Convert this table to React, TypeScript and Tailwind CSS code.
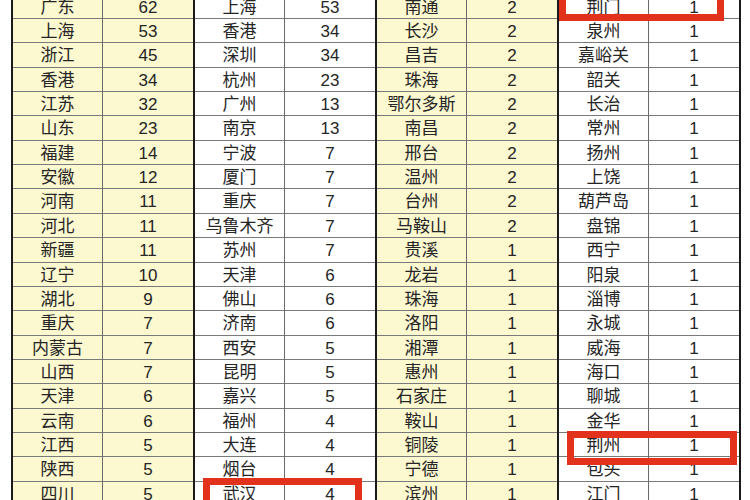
const groups: [string, number][][] = [
  [
    ["广东", 62], ["上海", 53], ["浙江", 45], ["香港", 34], ["江苏", 32], ["山东", 23], ["福建", 14],
    ["安徽", 12], ["河南", 11], ["河北", 11], ["新疆", 11], ["辽宁", 10], ["湖北", 9], ["重庆", 7],
    ["内蒙古", 7], ["山西", 7], ["天津", 6], ["云南", 6], ["江西", 5], ["陕西", 5], ["四川", 5],
  ],
  [
    ["上海", 53], ["香港", 34], ["深圳", 34], ["杭州", 23], ["广州", 13], ["南京", 13], ["宁波", 7],
    ["厦门", 7], ["重庆", 7], ["乌鲁木齐", 7], ["苏州", 7], ["天津", 6], ["佛山", 6], ["济南", 6],
    ["西安", 5], ["昆明", 5], ["嘉兴", 5], ["福州", 4], ["大连", 4], ["烟台", 4], ["武汉", 4],
  ],
  [
    ["南通", 2], ["长沙", 2], ["昌吉", 2], ["珠海", 2], ["鄂尔多斯", 2], ["南昌", 2], ["邢台", 2],
    ["温州", 2], ["台州", 2], ["马鞍山", 2], ["贵溪", 1], ["龙岩", 1], ["珠海", 1], ["洛阳", 1],
    ["湘潭", 1], ["惠州", 1], ["石家庄", 1], ["鞍山", 1], ["铜陵", 1], ["宁德", 1], ["滨州", 1],
  ],
  [
    ["荆门", 1], ["泉州", 1], ["嘉峪关", 1], ["韶关", 1], ["长治", 1], ["常州", 1], ["扬州", 1],
    ["上饶", 1], ["葫芦岛", 1], ["盘锦", 1], ["西宁", 1], ["阳泉", 1], ["淄博", 1], ["永城", 1],
    ["威海", 1], ["海口", 1], ["聊城", 1], ["金华", 1], ["荆州", 1], ["包头", 1], ["江门", 1],
  ],
];

function Group({ rows, yellow, last }: { rows: [string, number][]; yellow: boolean; last?: boolean }) {
  return (
    <div
      className={`flex flex-col border-l-2 border-[#1a1a1a] ${last ? "border-r-2" : ""} ${
        yellow ? "bg-[#fcf8d0]" : "bg-white"
      }`}
    >
      {rows.map(([name, n], i) => (
        <div key={i} className="grid h-[24.37px] grid-cols-[90px_90px] border-b border-[#7a7a7a]">
          <div className="flex items-center justify-center border-r border-[#6a6a6a]">{name}</div>
          <div className="flex items-center justify-center">{n}</div>
        </div>
      ))}
    </div>
  );
}

export default function App() {
  return (
    <div
      className="relative h-[500px] w-[750px] overflow-hidden bg-white text-[17px] text-[#252525]"
      style={{ fontFamily: '"Liberation Sans", "Noto Sans CJK SC", sans-serif' }}
    >
      <div className="-mt-[5.4px] ml-[11px] flex">
        {groups.map((rows, i) => (
          <Group key={i} rows={rows} yellow={i === 0 || i === 2} last={i === 3} />
        ))}
      </div>

      {/* red highlight boxes */}
      <div className="absolute left-[559px] top-[-10px] h-[31px] w-[165px] border-[7px] border-[#e3321b]" />
      <div className="absolute left-[567px] top-[431px] h-[34px] w-[170px] border-[7px] border-[#e3321b]" />
      <div className="absolute left-[203px] top-[478px] h-[40px] w-[159px] border-[7px] border-[#e3321b]" />
    </div>
  );
}
